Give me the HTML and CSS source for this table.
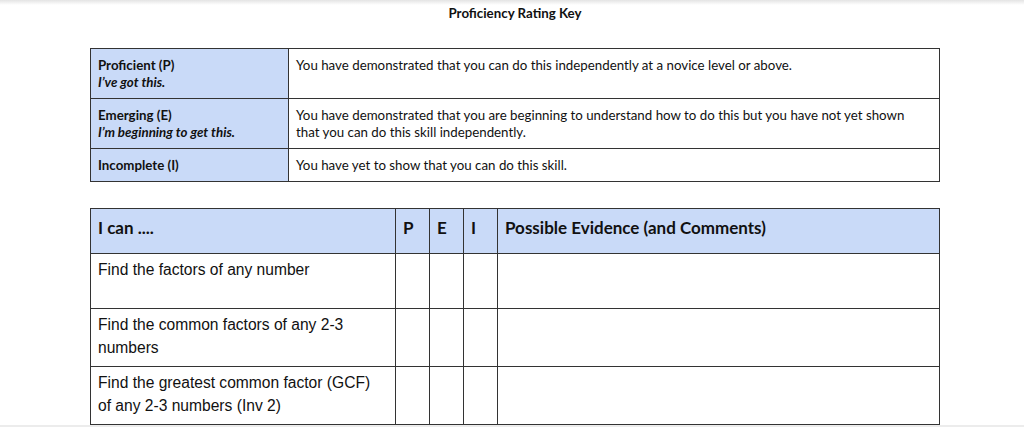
FILE: index.html
```html
<!DOCTYPE html>
<html lang="en">
<head>
    <meta charset="UTF-8">
    <meta name="viewport" content="width=device-width, initial-scale=1.0">
    <title>Proficiency Rating Key</title>
    <link rel="stylesheet" href="styles.css">
</head>
<body>
    <div class="page">
        <h1 class="title">Proficiency Rating Key</h1>

        <table class="key">
            <colgroup>
                <col class="col-level">
                <col>
            </colgroup>
            <tr>
                <td class="level">Proficient (P)<br><em>I’ve got this.</em></td>
                <td>You have demonstrated that you can do this independently at a novice level or above.</td>
            </tr>
            <tr>
                <td class="level">Emerging (E)<br><em>I’m beginning to get this.</em></td>
                <td>You have demonstrated that you are beginning to understand how to do this but you have not yet shown that you can do this skill independently.</td>
            </tr>
            <tr>
                <td class="level">Incomplete (I)</td>
                <td>You have yet to show that you can do this skill.</td>
            </tr>
        </table>

        <table class="skills">
            <colgroup>
                <col class="col-skill">
                <col class="col-mark">
                <col class="col-mark">
                <col class="col-mark">
                <col>
            </colgroup>
            <tr class="head">
                <th>I can ....</th>
                <th>P</th>
                <th>E</th>
                <th>I</th>
                <th>Possible Evidence (and Comments)</th>
            </tr>
            <tr class="short">
                <td>Find the factors of any number</td>
                <td></td><td></td><td></td><td></td>
            </tr>
            <tr>
                <td>Find the common factors of any 2-3 numbers</td>
                <td></td><td></td><td></td><td></td>
            </tr>
            <tr>
                <td>Find the greatest common factor (GCF) of any 2-3 numbers (Inv 2)</td>
                <td></td><td></td><td></td><td></td>
            </tr>
        </table>
    </div>
</body>
</html>
```

FILE: styles.css
```css
html {
    background: #ececec;
}

body {
    margin: 0;
    font-family: Lato, "Liberation Sans", sans-serif;
    color: #111;
}

.page {
    height: 425px;
    box-sizing: border-box;
    padding: 5px 0 0 90px;
    background: linear-gradient(#e4e4e4, #ffffff 5px);
}

.title {
    width: 850px;
    margin: 0 0 26px;
    text-align: center;
    font-size: 13.3px;
    line-height: 17px;
    font-weight: bold;
}

table {
    width: 850px;
    border-collapse: collapse;
    table-layout: fixed;
}

td, th {
    border: 1px solid #333;
    text-align: left;
    vertical-align: top;
}

/* key table */

.key {
    margin-bottom: 26px;
    font-size: 13.3px;
    line-height: 17px;
}

.key .col-level {
    width: 198px;
}

.key td {
    padding: 8px 24px 7px 7px;
}

.key .level {
    background: #c9daf8;
    font-weight: bold;
}

.key em {
    font-style: italic;
}

/* skills table */

.skills .col-skill {
    width: 305px;
}

.skills .col-mark {
    width: 34px;
}

.skills th {
    background: #c9daf8;
    font-size: 17px;
    font-weight: bold;
    line-height: 23px;
    padding: 7px 7px;
}

.skills .head {
    height: 45px;
}

.skills td {
    font-family: "Liberation Sans", Arial, sans-serif;
    font-size: 15.6px;
    line-height: 23px;
    padding: 4px 14px 4px 7px;
    height: 49px;
}

.skills .short td {
    height: 46px;
}
```
